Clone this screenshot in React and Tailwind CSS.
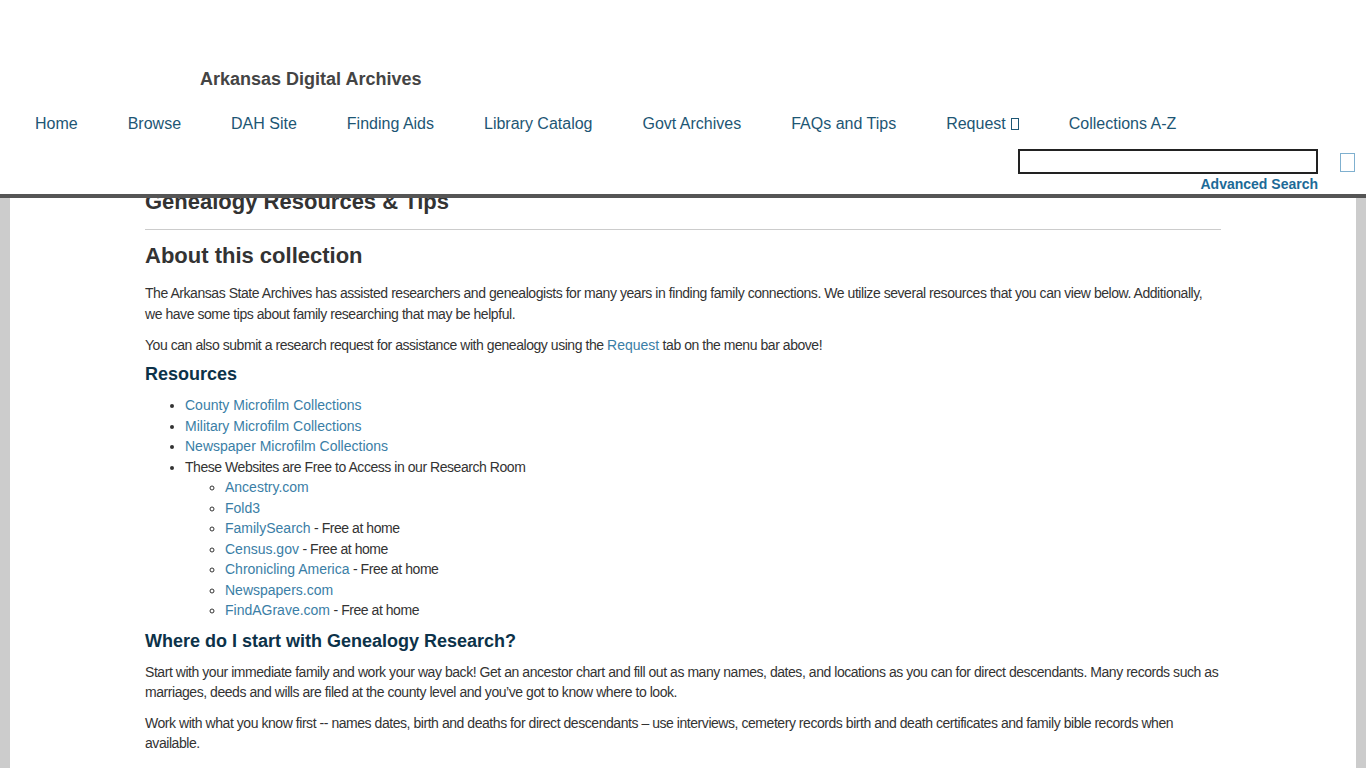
import React from 'react';

const navItems = ['Home', 'Browse', 'DAH Site', 'Finding Aids', 'Library Catalog', 'Govt Archives', 'FAQs and Tips', 'Request', 'Collections A-Z'];

const sites = [
    { name: 'Ancestry.com' },
    { name: 'Fold3' },
    { name: 'FamilySearch', note: ' - Free at home' },
    { name: 'Census.gov', note: ' - Free at home' },
    { name: 'Chronicling America', note: ' - Free at home' },
    { name: 'Newspapers.com' },
    { name: 'FindAGrave.com', note: ' - Free at home' },
];

function MissingGlyph({ className }) {
    return <span className={`inline-block border border-current ${className}`} />;
}

function Link({ children }) {
    return <a className="text-[#3a7ea6] tracking-normal">{children}</a>;
}

export default function App() {
    return (
        <div className="min-h-[768px] bg-[#cccccc] text-[#333] font-['Liberation_Sans',Arial,sans-serif]">
            {/* fixed header */}
            <header className="fixed top-0 left-0 right-0 z-10 h-[198px] bg-white border-b-4 border-[#555]">
                <div className="pt-[68px] pl-[200px] text-[18px] leading-[22px] font-bold text-[#444]">Arkansas Digital Archives</div>
                <nav className="flex pl-[10px] mt-[23px]">
                    {navItems.map(item => (
                        <a key={item} className="px-[25px] text-[16px] leading-[22px] text-[#1d5674] flex items-center">
                            {item}
                            {item === 'Request' && <MissingGlyph className="ml-[5px] w-[8px] h-[12px]" />}
                        </a>
                    ))}
                </nav>
                <div className="flex justify-end items-start pr-[11px] mt-[14px]">
                    <div className="flex flex-col items-end">
                        <input className="w-[300px] h-[25px] border-2 border-[#222] bg-white outline-none" />
                        <a className="mt-[2px] text-[14px] leading-[16px] font-bold text-[#1c6a97]">Advanced Search</a>
                    </div>
                    <span className="ml-[22px] mt-[4px] w-[15px] h-[19px] border border-[#7fb0cf]" />
                </div>
            </header>

            {/* page body */}
            <div className="mx-[10px] bg-white min-h-[768px]">
                <main className="w-[1076px] mx-auto pt-[189px] pb-[40px] text-[14px] leading-[20px] tracking-[-0.45px]">
                    <h1 className="text-[22px] leading-[25px] font-bold tracking-normal text-[#333]">Genealogy Resources &amp; Tips</h1>
                    <hr className="mt-[15px] border-t border-[#ccc]" />
                    <h2 className="mt-[13px] text-[22px] leading-[26px] font-bold tracking-normal text-[#333]">About this collection</h2>
                    <p className="mt-[14px] leading-[21px]">
                        The Arkansas State Archives has assisted researchers and genealogists for many years in finding family connections. We utilize several resources that you can view below. Additionally, we have some tips about family researching that may be helpful.
                    </p>
                    <p className="mt-[10px]">
                        You can also submit a research request for assistance with genealogy using the <Link>Request</Link> tab on the menu bar above!
                    </p>
                    <h3 className="mt-[9px] text-[18px] leading-[20px] font-bold tracking-normal text-[#0c3249]">Resources</h3>
                    <ul className="mt-[11px] pl-[40px] list-disc leading-[20.5px]">
                        <li><Link>County Microfilm Collections</Link></li>
                        <li><Link>Military Microfilm Collections</Link></li>
                        <li><Link>Newspaper Microfilm Collections</Link></li>
                        <li>
                            These Websites are Free to Access in our Research Room
                            <ul className="pl-[40px] list-[circle]">
                                {sites.map(s => (
                                    <li key={s.name}>
                                        <Link>{s.name}</Link>
                                        {s.note}
                                    </li>
                                ))}
                            </ul>
                        </li>
                    </ul>
                    <h3 className="mt-[10px] text-[18px] leading-[20px] font-bold tracking-normal text-[#0c3249]">Where do I start with Genealogy Research?</h3>
                    <p className="mt-[11px]">
                        Start with your immediate family and work your way back! Get an ancestor chart and fill out as many names, dates, and locations as you can for direct descendants. Many records such as marriages, deeds and wills are filed at the county level and you’ve got to know where to look.
                    </p>
                    <p className="mt-[11px]">
                        Work with what you know first -- names dates, birth and deaths for direct descendants – use interviews, cemetery records birth and death certificates and family bible records when available.
                    </p>
                </main>
            </div>
        </div>
    );
}
